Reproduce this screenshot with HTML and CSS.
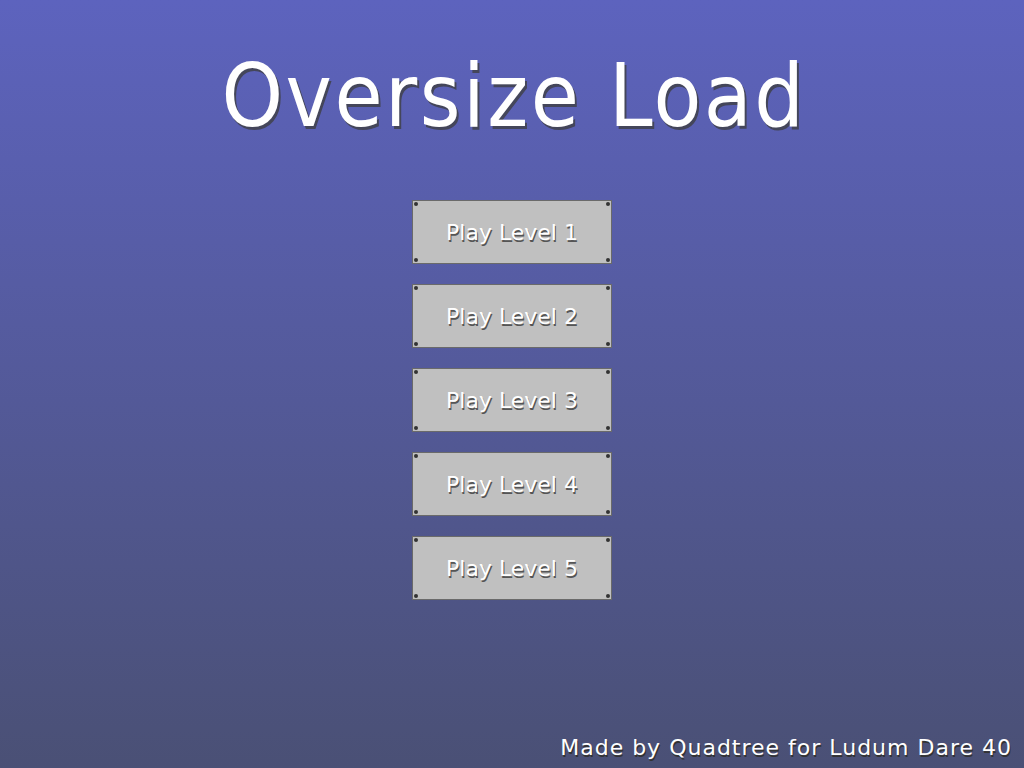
FILE: index.html
```html
<!DOCTYPE html>
<html>
<head>
<meta charset="utf-8">
<link rel="stylesheet" href="styles.css">
</head>
<body>
<div class="screen">
  <h1 class="title">Oversize Load</h1>
  <div class="menu">
    <button class="btn"><span class="screw tl"></span><span class="screw tr"></span><span class="screw bl"></span><span class="screw br"></span>Play Level 1</button>
    <button class="btn"><span class="screw tl"></span><span class="screw tr"></span><span class="screw bl"></span><span class="screw br"></span>Play Level 2</button>
    <button class="btn"><span class="screw tl"></span><span class="screw tr"></span><span class="screw bl"></span><span class="screw br"></span>Play Level 3</button>
    <button class="btn"><span class="screw tl"></span><span class="screw tr"></span><span class="screw bl"></span><span class="screw br"></span>Play Level 4</button>
    <button class="btn"><span class="screw tl"></span><span class="screw tr"></span><span class="screw bl"></span><span class="screw br"></span>Play Level 5</button>
  </div>
  <div class="credit">Made by Quadtree for Ludum Dare 40</div>
</div>
</body>
</html>
```
FILE: styles.css
```css
html, body {
  margin: 0;
  padding: 0;
}
body {
  width: 1024px;
  height: 768px;
  overflow: hidden;
  font-family: "DejaVu Sans", sans-serif;
}
.screen {
  width: 1024px;
  height: 768px;
  background: linear-gradient(to bottom, #5d63be 0%, #4a5075 100%);
  display: flex;
  flex-direction: column;
  align-items: center;
  position: relative;
}
.title {
  margin: 42px 0 0;
  padding-left: 4px;
  font-family: "DejaVu Sans Condensed", "DejaVu Sans", sans-serif;
  font-weight: normal;
  font-size: 87px;
  line-height: 108px;
  letter-spacing: 2.5px;
  color: #fff;
  text-shadow: 2px 3px 0 #44465a;
}
.menu {
  margin-top: 50px;
  display: flex;
  flex-direction: column;
  gap: 20px;
}
.btn {
  position: relative;
  width: 200px;
  height: 64px;
  box-sizing: border-box;
  background: #c0c0c0;
  border: 1px solid #6a6a6a;
  font-family: "DejaVu Sans", sans-serif;
  font-size: 22px;
  color: #fff;
  text-shadow: 1px 2px 0 #555;
  padding: 0;
}
.screw {
  position: absolute;
  width: 4px;
  height: 4px;
  border-radius: 50%;
  background: #333;
}
.tl { top: 1px; left: 1px; }
.tr { top: 1px; right: 1px; }
.bl { bottom: 1px; left: 1px; }
.br { bottom: 1px; right: 1px; }
.credit {
  position: absolute;
  right: 12px;
  bottom: 8px;
  font-size: 22px;
  color: #fff;
  text-shadow: 1px 2px 0 #333;
  letter-spacing: 1px;
}
```
